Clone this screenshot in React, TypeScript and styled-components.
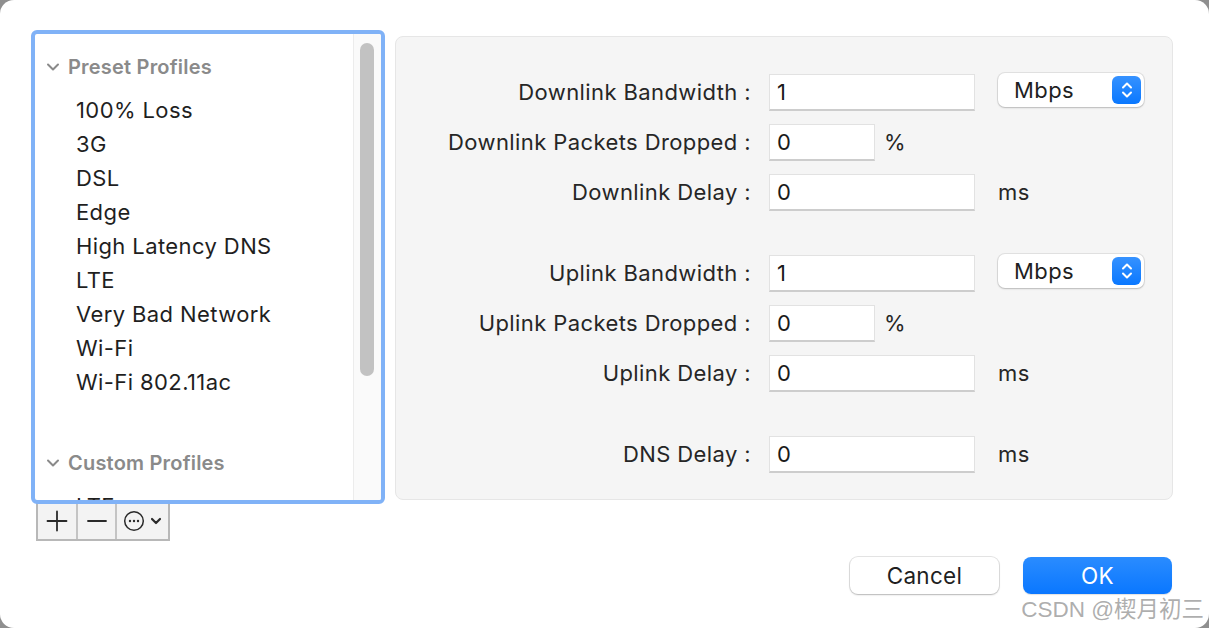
import React from "react";
import styled, { createGlobalStyle } from "styled-components";

const GlobalStyle = createGlobalStyle`
  html, body { margin: 0; padding: 0; }
  body {
    background: #8f8f8f;
    font-family: Inter, "Noto Sans", "Noto Sans CJK SC", sans-serif;
    -webkit-font-smoothing: antialiased;
  }
`;

const Window = styled.div`
  position: relative;
  width: 1209px;
  height: 628px;
  background: #ffffff;
  border-radius: 14px;
  overflow: hidden;
  box-sizing: border-box;
  padding: 30px 36px 0 31px;
  display: flex;
  flex-direction: column;
`;

const Main = styled.div`
  display: flex;
  gap: 10px;
  align-items: flex-start;
`;

const Sidebar = styled.div`
  width: 354px;
  display: flex;
  flex-direction: column;
`;

const ListBox = styled.div`
  position: relative;
  z-index: 1;
  height: 474px;
  box-sizing: border-box;
  border: 4px solid #80b2f7;
  border-radius: 6px;
  background: #ffffff;
  display: flex;
  overflow: hidden;
`;

const ListContent = styled.div`
  flex: 1;
  padding-top: 16px;
  overflow: hidden;
`;

const GroupHeader = styled.div<{ $top?: number }>`
  height: 34px;
  display: flex;
  align-items: center;
  padding-left: 11px;
  gap: 8px;
  margin-top: ${(p) => p.$top ?? 0}px;
  margin-bottom: 9px;
  color: #8a8a8a;
  font-weight: 600;
  font-size: 20px;
  letter-spacing: 0.2px;
`;

const Item = styled.div`
  height: 34px;
  display: flex;
  align-items: center;
  padding-left: 41px;
  font-size: 22px;
  letter-spacing: 0.4px;
  color: #1f1f1f;
`;

const ScrollTrack = styled.div`
  width: 28px;
  box-sizing: border-box;
  border-left: 1px solid #ececec;
  background: #fafafa;
  padding: 9px 7px 0 6px;
`;

const ScrollThumb = styled.div`
  height: 333px;
  border-radius: 8px;
  background: #c2c2c2;
`;

const SegBar = styled.div`
  display: flex;
  margin: -3px 0 0 5px;
  height: 40px;
  width: fit-content;
  border: 2px solid #b8b8b8;
  border-top-width: 1px;
  background: #f3f3f3;
  box-sizing: border-box;
`;

const Seg = styled.div<{ $w: number }>`
  width: ${(p) => p.$w}px;
  display: flex;
  align-items: center;
  justify-content: center;
  gap: 5px;
  color: #222;
  & + & { border-left: 2px solid #c4c4c4; }
`;

const Panel = styled.div`
  width: 778px;
  height: 464px;
  margin-top: 6px;
  box-sizing: border-box;
  background: #f5f5f5;
  border: 1px solid #e6e6e6;
  border-radius: 8px;
  padding-top: 30px;
  display: flex;
  flex-direction: column;
`;

const Group = styled.div`
  display: flex;
  flex-direction: column;
  & + & { margin-top: 31px; }
`;

const Row = styled.div`
  height: 50px;
  display: grid;
  grid-template-columns: 373px 229px auto;
  align-items: center;
`;

const Label = styled.div`
  text-align: right;
  padding-right: 18px;
  font-size: 22px;
  letter-spacing: 0.4px;
  color: #262626;
  white-space: nowrap;
`;

const FieldCell = styled.div`
  display: flex;
  align-items: center;
  gap: 9px;
`;

const Input = styled.div<{ $w: number }>`
  width: ${(p) => p.$w}px;
  height: 37px;
  box-sizing: border-box;
  background: #ffffff;
  border: 1px solid #e2e2e2;
  border-bottom: 2px solid #cdcdcd;
  display: flex;
  align-items: center;
  padding-left: 7px;
  font-size: 22px;
  color: #1a1a1a;
`;

const Unit = styled.div`
  font-size: 22px;
  letter-spacing: 0.4px;
  color: #262626;
`;

const Select = styled.div`
  width: 146px;
  height: 34px;
  margin-top: -4px;
  box-sizing: border-box;
  background: #ffffff;
  border-radius: 7px;
  box-shadow: 0 0 0 1px rgba(0, 0, 0, 0.08), 0 1px 2px rgba(0, 0, 0, 0.18);
  display: flex;
  align-items: center;
  justify-content: space-between;
  padding: 0 3px 0 16px;
  font-size: 22px;
  letter-spacing: 0.4px;
  color: #1f1f1f;
`;

const Stepper = styled.div`
  width: 29px;
  height: 28px;
  border-radius: 6px;
  background: linear-gradient(#3692ff, #0a78ff);
  display: flex;
  align-items: center;
  justify-content: center;
`;

const Footer = styled.div`
  display: flex;
  justify-content: flex-end;
  gap: 24px;
  margin-top: 16px;
  padding-right: 1px;
`;

const Button = styled.div<{ $primary?: boolean }>`
  width: 149px;
  height: 37px;
  box-sizing: border-box;
  border-radius: 8px;
  display: flex;
  align-items: center;
  justify-content: center;
  font-size: 22.5px;
  letter-spacing: 0.3px;
  color: ${(p) => (p.$primary ? "#ffffff" : "#1f1f1f")};
  background: ${(p) => (p.$primary ? "linear-gradient(#2a8cff, #0a77ff)" : "#ffffff")};
  box-shadow: ${(p) =>
    p.$primary
      ? "0 1px 1px rgba(0,0,0,0.12)"
      : "0 0 0 1px rgba(0,0,0,0.1), 0 1px 2px rgba(0,0,0,0.2)"};
`;

const Watermark = styled.div`
  position: absolute;
  right: 5px;
  bottom: 5px;
  font-family: "Liberation Sans", "Noto Sans CJK SC", sans-serif;
  font-size: 22.5px;
  color: rgba(160, 160, 160, 0.85);
  text-shadow: 0 0 2px #fff, 1px 1px 1px rgba(255, 255, 255, 0.9);
  white-space: nowrap;
`;

const Chevron = () => (
  <svg width="14" height="10" viewBox="0 0 14 10">
    <path d="M2 2.5 L7 7.5 L12 2.5" fill="none" stroke="#8a8a8a" strokeWidth="2" strokeLinecap="round" strokeLinejoin="round" />
  </svg>
);

const StepArrows = () => (
  <svg width="14" height="20" viewBox="0 0 14 20">
    <path d="M3 7.5 L7 3.5 L11 7.5 M3 12.5 L7 16.5 L11 12.5" fill="none" stroke="#fff" strokeWidth="2" strokeLinecap="round" strokeLinejoin="round" />
  </svg>
);

const PlusIcon = () => (
  <svg width="22" height="22" viewBox="0 0 22 22">
    <path d="M11 1.5 V20.5 M1.5 11 H20.5" stroke="#2a2a2a" strokeWidth="1.8" strokeLinecap="round" />
  </svg>
);

const MinusIcon = () => (
  <svg width="22" height="22" viewBox="0 0 22 22">
    <path d="M2 11 H20" stroke="#2a2a2a" strokeWidth="1.8" strokeLinecap="round" />
  </svg>
);

const MoreIcon = () => (
  <svg width="22" height="22" viewBox="0 0 22 22">
    <circle cx="11" cy="11" r="9.3" fill="none" stroke="#2a2a2a" strokeWidth="1.5" />
    <circle cx="7" cy="11" r="1.2" fill="#2a2a2a" />
    <circle cx="11" cy="11" r="1.2" fill="#2a2a2a" />
    <circle cx="15" cy="11" r="1.2" fill="#2a2a2a" />
  </svg>
);

const SmallChevron = () => (
  <svg width="12" height="10" viewBox="0 0 12 10">
    <path d="M2 3 L6 7 L10 3" fill="none" stroke="#2a2a2a" strokeWidth="2.2" strokeLinecap="round" strokeLinejoin="round" />
  </svg>
);

const presets = [
  "100% Loss",
  "3G",
  "DSL",
  "Edge",
  "High Latency DNS",
  "LTE",
  "Very Bad Network",
  "Wi-Fi",
  "Wi-Fi 802.11ac",
];

type Field = { label: string; value: string; width: number; unit?: "%" | "ms" | "select" };

const groups: Field[][] = [
  [
    { label: "Downlink Bandwidth :", value: "1", width: 206, unit: "select" },
    { label: "Downlink Packets Dropped :", value: "0", width: 106, unit: "%" },
    { label: "Downlink Delay :", value: "0", width: 206, unit: "ms" },
  ],
  [
    { label: "Uplink Bandwidth :", value: "1", width: 206, unit: "select" },
    { label: "Uplink Packets Dropped :", value: "0", width: 106, unit: "%" },
    { label: "Uplink Delay :", value: "0", width: 206, unit: "ms" },
  ],
  [{ label: "DNS Delay :", value: "0", width: 206, unit: "ms" }],
];

export default function App() {
  return (
    <>
      <GlobalStyle />
      <Window>
        <Main>
          <Sidebar>
            <ListBox>
              <ListContent>
                <GroupHeader>
                  <Chevron />
                  Preset Profiles
                </GroupHeader>
                {presets.map((p) => (
                  <Item key={p}>{p}</Item>
                ))}
                <GroupHeader $top={47}>
                  <Chevron />
                  Custom Profiles
                </GroupHeader>
                <Item>LTE</Item>
              </ListContent>
              <ScrollTrack>
                <ScrollThumb />
              </ScrollTrack>
            </ListBox>
            <SegBar>
              <Seg $w={38}>
                <PlusIcon />
              </Seg>
              <Seg $w={37}>
                <MinusIcon />
              </Seg>
              <Seg $w={51}>
                <MoreIcon />
                <SmallChevron />
              </Seg>
            </SegBar>
          </Sidebar>
          <Panel>
            {groups.map((g, gi) => (
              <Group key={gi}>
                {g.map((f) => (
                  <Row key={f.label}>
                    <Label>{f.label}</Label>
                    <FieldCell>
                      <Input $w={f.width}>{f.value}</Input>
                      {f.unit === "%" && <Unit>%</Unit>}
                    </FieldCell>
                    {f.unit === "ms" && <Unit>ms</Unit>}
                    {f.unit === "select" && (
                      <Select>
                        Mbps
                        <Stepper>
                          <StepArrows />
                        </Stepper>
                      </Select>
                    )}
                  </Row>
                ))}
              </Group>
            ))}
          </Panel>
        </Main>
        <Footer>
          <Button>Cancel</Button>
          <Button $primary>OK</Button>
        </Footer>
        <Watermark>CSDN @楔月初三</Watermark>
      </Window>
    </>
  );
}
